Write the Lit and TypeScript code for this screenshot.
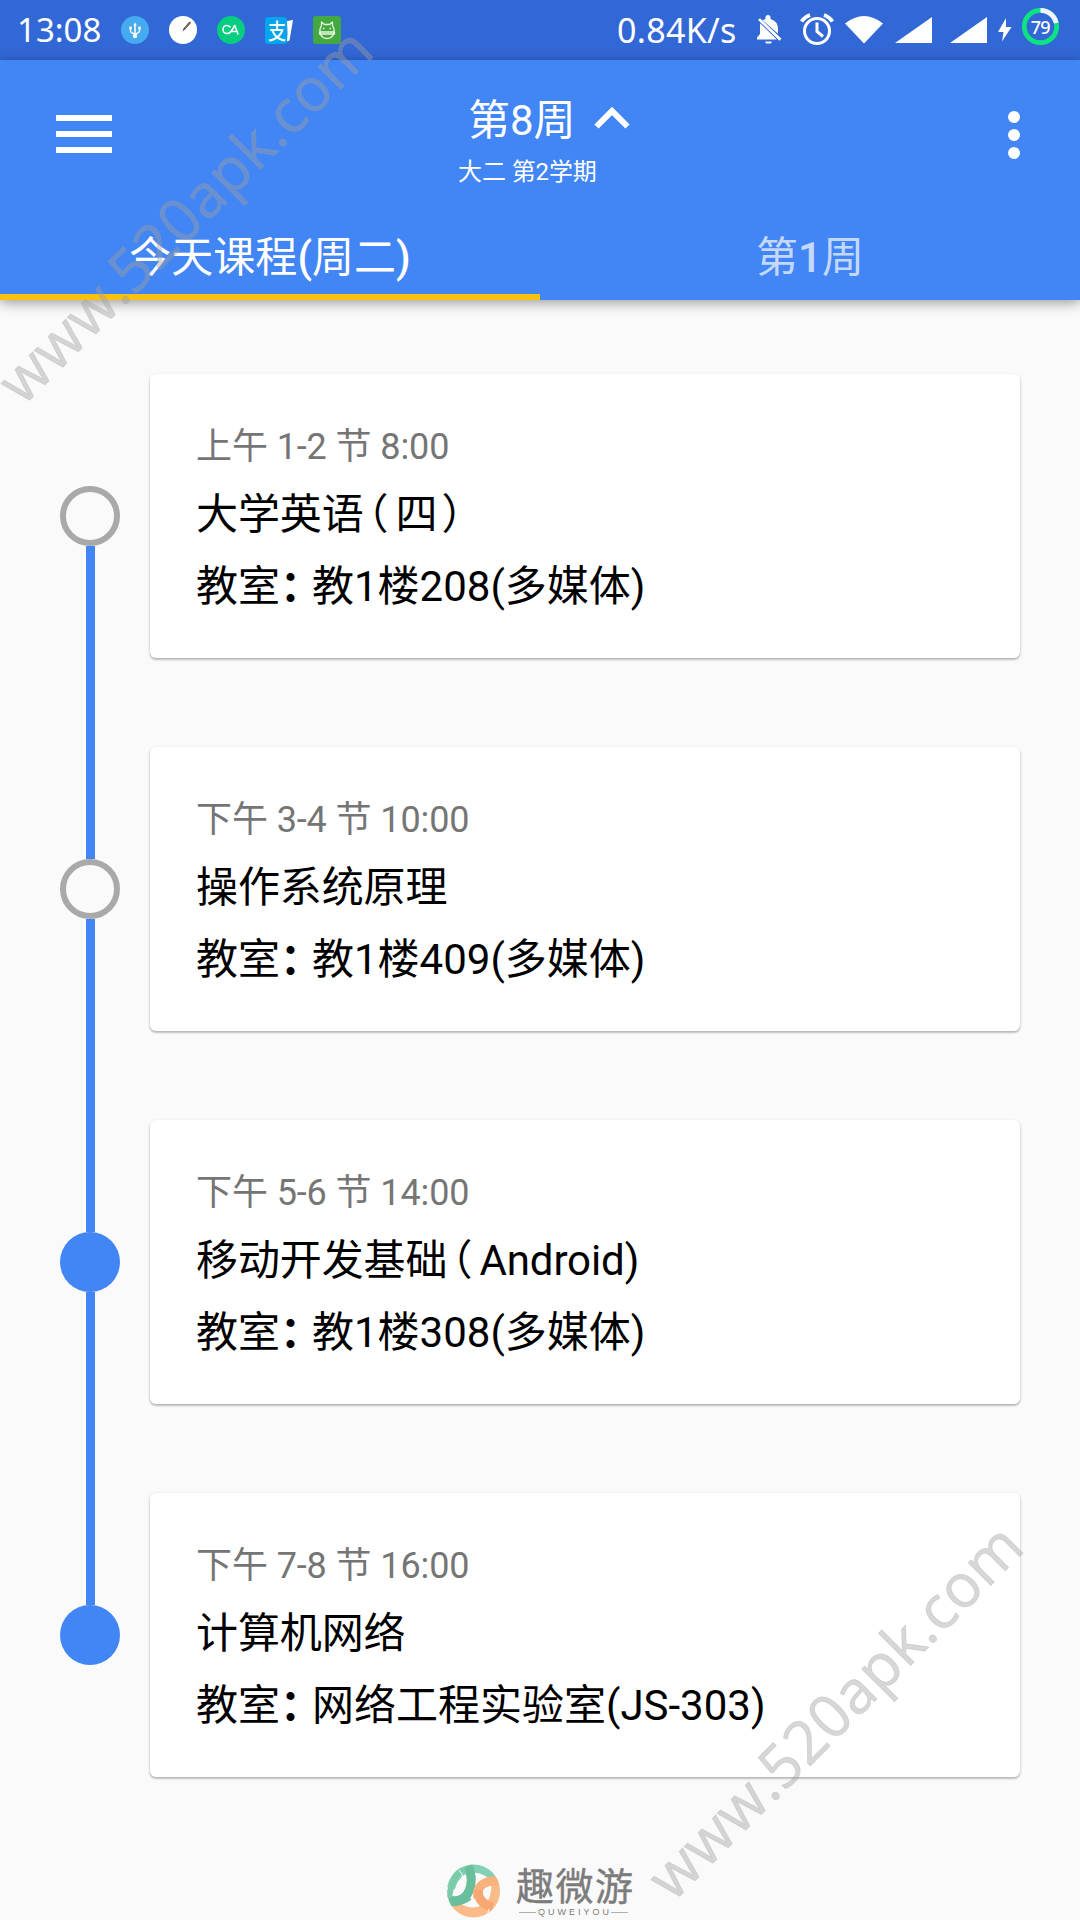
import { LitElement, html, css, svg } from "lit";
import { customElement, property } from "lit/decorators.js";
import { classMap } from "lit/directives/class-map.js";

interface Lesson {
  time: string;
  name: string;
  room: string;
  done: boolean;
}

const LESSONS: Lesson[] = [
  { time: "上午 1-2 节 8:00", name: "大学英语\uFF08四\uFF09", room: "教1楼208(多媒体)", done: true },
  { time: "下午 3-4 节 10:00", name: "操作系统原理", room: "教1楼409(多媒体)", done: true },
  { time: "下午 5-6 节 14:00", name: "移动开发基础\uFF08Android)", room: "教1楼308(多媒体)", done: false },
  { time: "下午 7-8 节 16:00", name: "计算机网络", room: "网络工程实验室(JS-303)", done: false },
];

const PUNCT: Record<string, string> = { "\uFF08": "open", "\uFF09": "close", "\uFF1A": "colon" };

/** Full-width punctuation is set in narrower cells than the ideographs. */
const setText = (text: string) =>
  text
    .split(/([\uFF08\uFF09\uFF1A])/)
    .filter((part) => part)
    .map((part) => (PUNCT[part] ? html`<span class="punct ${PUNCT[part]}">${part}</span>` : part));

@customElement("status-bar")
export class StatusBar extends LitElement {
  static styles = css`
    :host {
      display: flex;
      height: 60px;
      background: #3267d6;
      color: #fff;
      font: 34px/60px "Noto Sans", sans-serif;
      box-sizing: border-box;
      padding-left: 17px;
      white-space: nowrap;
    }
    svg { display: block; flex: none; }
    .clock { width: 104px; font-size: 33px; }
    .apps { display: flex; gap: 20px; padding-top: 16px; }
    .apps .wide { margin-right: -2px; }
    .speed { margin-left: auto; width: 139px; letter-spacing: 0.3px; }
    .system { display: flex; width: 324px; padding-top: 6px; }
    .battery { font: 500 18px "Noto Sans", sans-serif; letter-spacing: -0.8px; }
    .pay { font: 500 22px "Noto Sans CJK SC", sans-serif; }
  `;

  render() {
    return html`
      <div class="clock">13:08</div>
      <div class="apps">
        <svg width="28" height="28" viewBox="0 0 28 28">
          <circle cx="14" cy="14" r="14" fill="#46aaf0" />
          <g fill="none" stroke="#fff" stroke-width="1.5">
            <path d="M14 8v12M9.500 12v3q0 1.800 4.500 3M18.500 12v3q0 1.800 -4.500 3" />
          </g>
          <g fill="#fff">
            <path d="M14 6.500l1.800 3h-3.600z" />
            <circle cx="14" cy="20" r="2.200" />
            <circle cx="9.500" cy="12" r="1.400" />
            <rect x="17.200" y="10.700" width="2.600" height="2.600" />
          </g>
        </svg>
        <svg width="28" height="28" viewBox="0 0 28 28">
          <circle cx="14" cy="14" r="14" fill="#fff" />
          <path d="M13.500 15.500l1-3 5-6 2-1 0 2-5 5.500z" fill="#5d4637" />
          <path d="M16 12l4.500-5" stroke="#b08a5a" stroke-width=".8" />
        </svg>
        <svg width="28" height="28" viewBox="0 0 28 28">
          <circle cx="14" cy="14" r="14" fill="#06cd7f" />
          <g fill="none" stroke="#fff" stroke-width="1.600" stroke-linecap="round" stroke-linejoin="round">
            <path d="M13 11q-1-1.500-3-1.500a4 4 0 0 0 0 8q3 0 5-3.500l2.800-4.500 3.200 8.500M14.500 15.500h5.500" />
          </g>
        </svg>
        <svg class="wide" width="30" height="28" viewBox="0 0 30 28">
          <rect y="1" width="22" height="27" rx="3" fill="#05a4ee" />
          <text class="pay" x="3" y="22.500" fill="#fff" textLength="18" lengthAdjust="spacingAndGlyphs">支</text>
          <path d="M22 5l6-1-3.500 20.500-2.500 1 .5-8z" fill="#fff" />
        </svg>
        <svg width="28" height="28" viewBox="0 0 28 28">
          <rect width="28" height="28" rx="3" fill="#43a842" />
          <g fill="none" stroke="#e9f7dc" stroke-width="1.300" stroke-linejoin="round">
            <path d="M7 15v-2l1.500-3.500V6l3 2.500h5l3-2.500v3.500L21 13v2q-.5 7.500-7 7.500T7 15zM6.500 16h15v2h-15z" />
            <path d="M10 12.500h1.500M16.500 12.500h1.500" />
          </g>
        </svg>
      </div>
      <div class="speed">0.84K/s</div>
      <div class="system">
        <svg width="324" height="44" viewBox="756 6 324 44">
          <g fill="#fff">
            <path d="M765.500 41.500h6v1a1 1 0 0 1-1 1h-4a1 1 0 0 1-1-1zM762.800 20.200q1.200-.9 2.700-1.200v-1.500a2.500 2.500 0 0 1 5 0v1.500q7.500 2 7.500 10.500v4.200zM760.200 23.300L776.800 39.500H757v-2l3-3.500v-5q0-3.500.2-5.700z" />
            <path d="M758 20l2-1.800 21.500 20.500-2 2z" />
            <path d="M845 23.500q19-15 38 0l-19 20z" />
            <path d="M895 43l37-26v26zM950 43l37-26v26z" />
            <path d="M1006 18l-8 14h5.500l-1.500 9.500 9.500-14.500h-5.500z" />
          </g>
          <g fill="none" stroke="#fff">
            <circle cx="817" cy="31" r="12.500" stroke-width="3" />
            <path d="M817 22.500v9l6 5" stroke-width="3" />
            <path d="M801.500 21.500q3-4.500 8.500-6.500M832.500 21.500q-3-4.500-8.500-6.500" stroke-width="3.600" />
            <circle cx="1040.500" cy="26.500" r="16.200" stroke="#0fe283" stroke-width="4.800" />
            <path d="M1040.500 10.300a16.200 16.200 0 0 1 15.800 12.700" stroke="#f2f4ff" stroke-width="4.800" />
          </g>
          <text class="battery" x="1040.200" y="34" fill="#fff" text-anchor="middle">79</text>
        </svg>
      </div>
    `;
  }
}

@customElement("app-header")
export class AppHeader extends LitElement {
  static styles = css`
    :host {
      display: flex;
      flex-direction: column;
      height: 240px;
      background: #4285f5;
      color: #fff;
      font-family: Roboto, "Noto Sans CJK SC", sans-serif;
      box-shadow: 0 3px 12px rgba(0, 0, 0, 0.38);
      position: relative;
    }
    .bar {
      height: 114px;
      flex: none;
      display: flex;
      padding: 0 60px 0 56px;
      align-items: flex-start;
    }
    .menu { display: flex; flex-direction: column; gap: 10px; width: 56px; margin-top: 55px; }
    .menu i { height: 6px; background: #fff; }
    .heading { margin-left: 346px; display: flex; flex-direction: column; flex: 1; }
    .week { display: flex; gap: 18px; align-items: flex-start; font-size: 42px; line-height: 50px; margin: 36px 0 0 10px; }
    .week svg { margin-top: 11px; }
    .term { font-size: 24px; line-height: 30px; margin-top: 11px; letter-spacing: -0.1px; }
    .more { display: flex; flex-direction: column; gap: 6px; margin-top: 51px; }
    .more i { width: 12px; height: 12px; border-radius: 50%; background: #fff; }
    .tabs { flex: 1; display: grid; grid-template-columns: 1fr 1fr; }
    .tab {
      display: flex;
      justify-content: center;
      padding-top: 59px;
      font-size: 42px;
      line-height: 50px;
      border-bottom: 6px solid transparent;
      box-sizing: border-box;
      color: rgba(255, 255, 255, 0.7);
    }
    .tab b { font-weight: 500; }
    .tab.active { color: #fff; border-color: #fbc10f; }
  `;

  render() {
    return html`
      <div class="bar">
        <div class="menu"><i></i><i></i><i></i></div>
        <div class="heading">
          <div class="week">
            <span>第8周</span>
            <svg width="36" height="22" viewBox="0 0 36 22">
              <path d="M2.500 19.500L18 4l15.500 15.500" fill="none" stroke="#fff" stroke-width="6" />
            </svg>
          </div>
          <div class="term">大二 第2学期</div>
        </div>
        <div class="more"><i></i><i></i><i></i></div>
      </div>
      <div class="tabs">
        <div class="tab active">今天课程<b>(</b>周二<b>)</b></div>
        <div class="tab">第<b>1</b>周</div>
      </div>
    `;
  }
}

@customElement("lesson-row")
export class LessonRow extends LitElement {
  @property({ attribute: false }) lesson!: Lesson;
  @property({ type: Boolean }) last = false;

  static styles = css`
    :host {
      display: grid;
      grid-template: 284px / 60px 870px;
      column-gap: 30px;
      height: 284px;
      font-family: Roboto, "Noto Sans CJK SC", sans-serif;
    }
    .rail { display: flex; flex-direction: column; align-items: center; padding-top: 112px; }
    .dot { width: 60px; height: 60px; border-radius: 50%; flex: none; box-sizing: border-box; background: #4285f5; }
    .dot.done { background: transparent; border: 6px solid #a9a9a9; }
    .line { width: 9px; height: 313px; flex: none; background: #4285f5; }
    .card {
      background: #fff;
      border-radius: 6px;
      box-shadow: 0 1px 3px rgba(0, 0, 0, 0.22), 0 2px 2px rgba(0, 0, 0, 0.14);
      padding: 48px 0 0 46px;
      box-sizing: border-box;
      white-space: nowrap;
    }
    .time { font-size: 36px; line-height: 50px; color: #757575; letter-spacing: -0.1px; }
    .name, .room { font-size: 42px; line-height: 60px; color: #000; }
    .name { margin-top: 13px; letter-spacing: -0.1px; }
    .room { margin-top: 12px; }
    .punct { display: inline-block; width: 32px; }
    .open { text-indent: -17px; }
    .close { text-indent: 4px; }
    .colon { text-indent: 0; font-weight: 700; line-height: 50px; }
  `;

  render() {
    const { time, name, room, done } = this.lesson;
    return html`
      <div class="rail">
        <div class=${classMap({ dot: true, done })}></div>
        ${this.last ? null : html`<div class="line"></div>`}
      </div>
      <div class="card">
        <div class="time">${time}</div>
        <div class="name">${setText(name)}</div>
        <div class="room">${setText("教室\uFF1A" + room)}</div>
      </div>
    `;
  }
}

@customElement("brand-mark")
export class BrandMark extends LitElement {
  static styles = css`
    :host { display: flex; justify-content: center; gap: 15px; padding-top: 87px; color: #7c7c7c; }
    .words { display: flex; flex-direction: column; width: 117px; }
    .cn { font: 400 38px/42px "Noto Sans CJK SC", sans-serif; letter-spacing: 1.5px; white-space: nowrap; margin-top: -1px; -webkit-text-stroke: 0.4px #7c7c7c; }
    .en { display: flex; align-items: center; gap: 2px; font: 9px/10px "Liberation Sans", sans-serif; margin: 2px 5px 0 3px; }
    .en span { letter-spacing: 3px; margin-right: -3px; }
    .en i { flex: 1; height: 1px; background: #b0b0b0; }
  `;

  render() {
    return html`
      <svg width="54" height="54" viewBox="0 0 54 54">
        ${svg`
          <defs><clipPath id="disc"><circle cx="26.500" cy="27" r="26.500"/></clipPath></defs>
          <g clip-path="url(#disc)" fill="none">
            <path d="M4 38Q18 54 36 47 50 42 50 20" stroke="#fabb88" stroke-width="11"/>
            <path d="M3 24Q7 8 21 4 38 1 50 16" stroke="#84d0b2" stroke-width="10"/>
            <path d="M12 5Q8 22 18 38" stroke="#9addc2" stroke-width="0"/>
            <path d="M-1 35Q16 41 22 27 27 15 21 2" stroke="#69bf9c" stroke-width="9"/>
            <path d="M15 4Q4 16 2 34" stroke="#7bcbab" stroke-width="6"/>
            <path d="M31 34Q28 15 56 17" stroke="#fab27c" stroke-width="9"/>
            <path d="M31 26Q31 40 46 43" stroke="#f6a772" stroke-width="9"/>
            <path d="M0 41Q14 42 24 35" stroke="#69bf9c" stroke-width="2"/>
            <path d="M12 6Q15 9 16 14M42 45Q40 49 41 54" stroke="#fafafa" stroke-width="1"/>
          </g>
        `}
      </svg>
      <div class="words">
        <div class="cn">趣微游</div>
        <div class="en"><i></i><span>QUWEIYOU</span><i></i></div>
      </div>
    `;
  }
}

@customElement("app-root")
export class AppRoot extends LitElement {
  static styles = css`
    :host {
      display: flex;
      flex-direction: column;
      position: relative;
      width: 1080px;
      height: 1920px;
      overflow: hidden;
      background: #fafafa;
    }
    status-bar, app-header { flex: none; }
    .timeline { display: flex; flex-direction: column; gap: 89px; padding: 74px 60px 0; }
    .mark {
      position: absolute;
      font: 60px/60px "Open Sans", sans-serif;
      letter-spacing: 0.3px;
      color: rgba(160, 160, 160, 0.42);
      -webkit-text-stroke: 0.8px rgba(160, 160, 160, 0.3);
      white-space: nowrap;
      transform-origin: 0 100%;
      transform: rotate(-45deg);
      pointer-events: none;
    }
    .mark.top { left: 28px; top: 352px; }
    .mark.bottom { left: 678px; top: 1848px; }
  `;

  render() {
    return html`
      <status-bar></status-bar>
      <app-header></app-header>
      <div class="timeline">
        ${LESSONS.map(
          (lesson, i) => html`<lesson-row .lesson=${lesson} ?last=${i === LESSONS.length - 1}></lesson-row>`,
        )}
      </div>
      <brand-mark></brand-mark>
      <div class="mark top">www.520apk.com</div>
      <div class="mark bottom">www.520apk.com</div>
    `;
  }
}
